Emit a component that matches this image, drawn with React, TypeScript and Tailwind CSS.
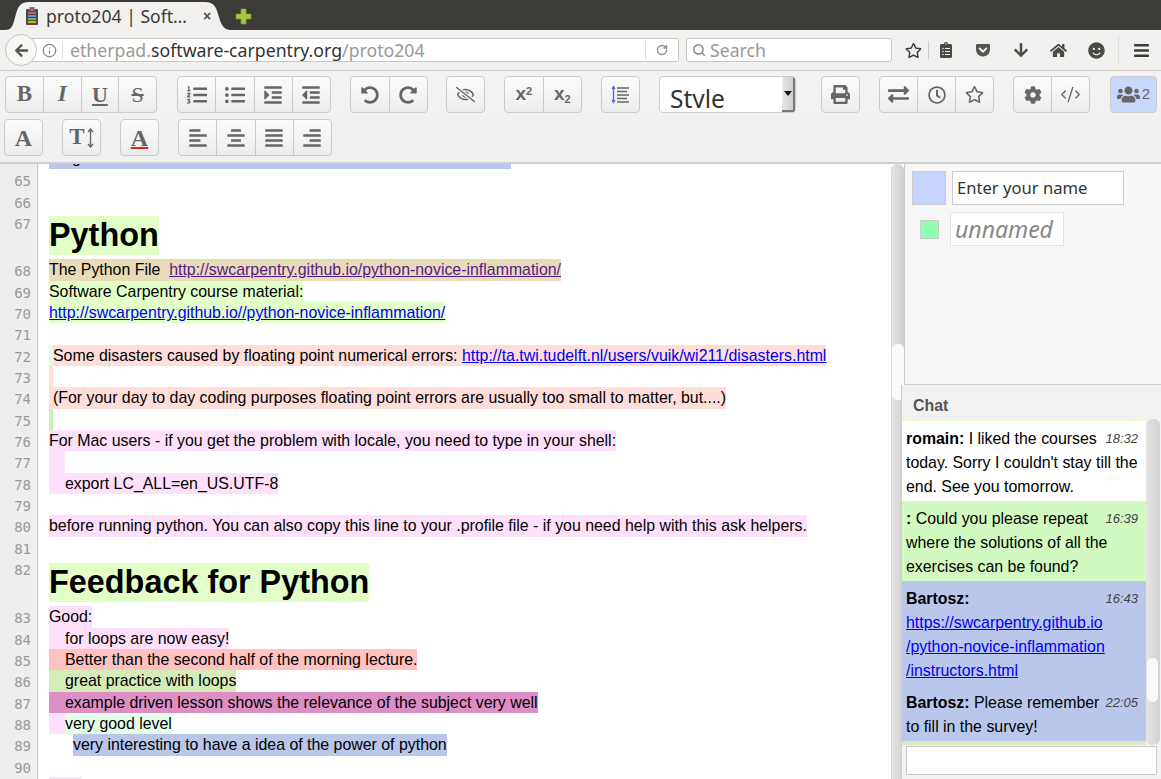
import React from 'react';
import {
  FaAlignCenter,
  FaAlignJustify,
  FaAlignLeft,
  FaAlignRight,
  FaArrowDown,
  FaArrowLeft,
  FaBars,
  FaClipboardList,
  FaCog,
  FaExchangeAlt,
  FaGetPocket,
  FaHome,
  FaIndent,
  FaListOl,
  FaListUl,
  FaOutdent,
  FaPrint,
  FaRedoAlt,
  FaRegClock,
  FaRegEyeSlash,
  FaRegStar,
  FaSmile,
  FaUndoAlt,
  FaUsers,
} from 'react-icons/fa';
import { CodeXml, Info, RotateCw, Search } from 'lucide-react';

const Btn: React.FC<{ children: React.ReactNode }> = ({ children }) => (
  <div className="flex-1 h-full flex items-center justify-center text-[#666] border-l border-[#ccc] first:border-l-0">
    {children}
  </div>
);

const Group: React.FC<{ className: string; children: React.ReactNode }> = ({ className, children }) => (
  <div
    className={`flex h-[37px] shrink-0 rounded-[4px] border border-[#ccc] bg-linear-to-b from-[#fbfbfb] to-[#ededed] ${className}`}
  >
    {children}
  </div>
);

const Serif: React.FC<{ className?: string; children: React.ReactNode }> = ({ className = '', children }) => (
  <span className={`font-['Liberation_Serif',serif] font-bold text-[#666] ${className}`}>{children}</span>
);

const TabBar = () => (
  <div className="h-[30px] bg-[#3c3b37] flex items-end pl-[5px] shrink-0">
    <div className="relative w-[228px] h-[28px] flex items-center pl-[20px] text-[#3c3b37]">
      <svg className="absolute inset-0" width="232" height="28" viewBox="0 0 232 28">
        <path
          d="M0 28 C8 28 8 22 11 12 C13 4 16 0 24 0 L200 0 C208 0 211 4 213 12 C216 22 218 28 226 28 Z"
          fill="#f2f1f0"
        />
      </svg>
      <svg className="relative shrink-0" width="14" height="18" viewBox="0 0 14 18">
        <rect x="1" y="2" width="12" height="16" rx="1" fill="#4a4a46" />
        <rect x="4.5" y="0" width="5" height="4" fill="#77766f" />
        <rect x="3" y="5" width="8" height="2" fill="#d64a9a" />
        <rect x="3" y="8" width="8" height="2" fill="#5b8fd9" />
        <rect x="3" y="11" width="8" height="2" fill="#6cbf3c" />
        <rect x="3" y="14" width="8" height="2" fill="#e8a11c" />
      </svg>
      <span className="relative ml-[7px] font-['Noto_Sans',sans-serif] text-[17.6px] whitespace-pre w-[150px]">proto204 | Soft…</span>
      <span className="relative ml-[7px] text-[14px] font-bold text-[#55544f] font-['Liberation_Sans',sans-serif]">×</span>
    </div>
    <svg className="mb-[5px] ml-[2px]" width="17" height="17" viewBox="0 0 17 17">
      <path d="M6 1h5v5h5v5h-5v5H6v-5H1V6h5z" fill="#a5c93d" stroke="#7f9c2c" strokeWidth="0.7" />
    </svg>
  </div>
);

const NavBar = () => (
  <div className="h-[41px] bg-[#f2f1f0] border-b border-[#cfcac5] flex items-center pl-[5px] shrink-0 font-['Noto_Sans',sans-serif] text-[#4a4a46]">
    <div className="relative z-10 w-[32px] h-[32px] rounded-full border border-[#c9c5c0] bg-[#f7f7f6] flex items-center justify-center shrink-0">
      <FaArrowLeft size={15} className="text-[#55544f]" />
    </div>
    <div className="-ml-[17px] w-[659px] h-[24px] bg-white border border-[#cbc7c2] rounded-[3px] flex items-center shrink-0">
      <Info size={15} className="ml-[21px] text-[#8a8a86] shrink-0" />
      <div className="ml-[5px] w-px h-[18px] bg-[#ddd]" />
      <span className="ml-[7px] text-[17.7px] whitespace-pre text-[#999] w-[575px]">
        etherpad.<span className="text-[#333]">software-carpentry.org</span>/proto204
      </span>
      <div className="w-px h-[18px] bg-[#ddd]" />
      <RotateCw size={12} className="ml-[10px] text-[#8a9499]" strokeWidth={3} />
    </div>
    <div className="ml-[7px] w-[206px] h-[24px] bg-white border border-[#cbc7c2] rounded-[3px] flex items-center pl-[5px] shrink-0">
      <Search size={14} className="text-[#888]" strokeWidth={2.5} />
      <span className="ml-[4px] text-[17.7px] text-[#999]">Search</span>
    </div>
    <FaRegStar size={17} className="ml-[13px] text-[#3c3b37] shrink-0" />
    <div className="ml-[6px] w-px h-[18px] bg-[#ccc]" />
    <FaClipboardList size={16} className="ml-[9px] shrink-0" />
    <FaGetPocket size={16} className="ml-[21px] text-[#55544f] shrink-0" />
    <FaArrowDown size={16} className="ml-[22px] shrink-0" />
    <FaHome size={17} className="ml-[21px] shrink-0" />
    <FaSmile size={17} className="ml-[21px] shrink-0" />
    <div className="ml-[13px] w-px h-[30px] bg-[#e0dedb]" />
    <FaBars size={17} className="ml-[14px] text-[#3c3b37] shrink-0" />
  </div>
);

const Toolbar = () => (
  <div className="h-[93px] bg-linear-to-b from-[#f4f3f3] to-[#f0f0f0] border-b-[2px] border-[#d0d0d0] pt-[5px] pl-[5px] shrink-0">
    <div className="flex gap-[19px]">
      <Group className="w-[152px]">
        <Btn><Serif className="text-[23px]">B</Serif></Btn>
        <Btn><Serif className="text-[23px] italic">I</Serif></Btn>
        <Btn><Serif className="text-[22px] underline underline-offset-2">U</Serif></Btn>
        <Btn><Serif className="text-[22px] line-through font-normal">S</Serif></Btn>
      </Group>
      <Group className="w-[154px] ml-px">
        <Btn><FaListOl size={20} /></Btn>
        <Btn><FaListUl size={20} /></Btn>
        <Btn><FaIndent size={20} /></Btn>
        <Btn><FaOutdent size={20} /></Btn>
      </Group>
      <Group className="w-[78px]">
        <Btn><FaUndoAlt size={18} /></Btn>
        <Btn><FaRedoAlt size={18} /></Btn>
      </Group>
      <Group className="w-[39px] -ml-px">
        <Btn><FaRegEyeSlash size={19} /></Btn>
      </Group>
      <Group className="w-[78px]">
        <Btn>
          <span className="font-['Liberation_Sans',sans-serif] font-bold text-[19px] text-[#666]">
            x<sup className="text-[11px]">2</sup>
          </span>
        </Btn>
        <Btn>
          <span className="font-['Liberation_Sans',sans-serif] font-bold text-[19px] text-[#666]">
            x<sub className="text-[11px]">2</sub>
          </span>
        </Btn>
      </Group>
      <Group className="w-[39px]">
        <Btn>
          <svg width="19" height="19" viewBox="0 0 19 19">
            <path d="M2.5 2v15M1 4l1.5-2.5L4 4M1 15l1.5 2.5L4 15" stroke="#4a6fd8" strokeWidth="1.3" fill="none" />
            <path d="M6 3h12M6 6.5h10M6 10h12M6 13.5h10M6 17h12" stroke="#666" strokeWidth="1.4" />
          </svg>
        </Btn>
      </Group>
      <div className="relative w-[137px] h-[37px] shrink-0 rounded-[4px] border border-[#ccc] bg-white overflow-hidden flex">
        <div className="flex-1 h-[31px] overflow-hidden pl-[10px] font-['Noto_Sans',sans-serif] text-[24.5px] leading-[43px] text-[#333]">
          Style
        </div>
        <div className="w-[13px] h-full bg-linear-to-r from-[#e6e6e6] to-[#cfcfcf] border-r-[2px] border-b-[2px] border-[#777] flex justify-center pt-[14px]">
          <div className="w-0 h-0 border-x-[4px] border-x-transparent border-t-[5px] border-t-[#111]" />
        </div>
      </div>
      <Group className="w-[39px] ml-[6px]">
        <Btn><FaPrint size={19} /></Btn>
      </Group>
      <Group className="w-[115px]">
        <Btn><FaExchangeAlt size={21} /></Btn>
        <Btn><FaRegClock size={18} /></Btn>
        <Btn><FaRegStar size={19} /></Btn>
      </Group>
      <Group className="w-[77px]">
        <Btn><FaCog size={18} /></Btn>
        <Btn><CodeXml size={21} strokeWidth={1.5} /></Btn>
      </Group>
      <div className="ml-px w-[47px] h-[37px] shrink-0 rounded-[4px] border border-[#ccc] bg-[#c9d7fa] flex items-center justify-center gap-[2px] text-[#666]">
        <FaUsers size={23} />
        <span className="font-['Liberation_Sans',sans-serif] text-[15px]">2</span>
      </div>
    </div>
    <div className="flex mt-[6px] -ml-px">
      <Group className="w-[39px]">
        <Btn><Serif className="text-[24px]">A</Serif></Btn>
      </Group>
      <Group className="w-[39px] ml-[19px]">
        <Btn>
          <Serif className="text-[23px] flex items-center">
            T
            <svg className="ml-[2px]" width="7" height="20" viewBox="0 0 7 20">
              <path d="M3.5 1v18M1 4l2.5-3L6 4M1 16l2.5 3L6 16" stroke="#666" strokeWidth="1.4" fill="none" />
            </svg>
          </Serif>
        </Btn>
      </Group>
      <Group className="w-[39px] ml-[19px]">
        <Btn><Serif className="text-[24px] underline decoration-[#e02020] decoration-[1.5px] underline-offset-1">A</Serif></Btn>
      </Group>
      <Group className="w-[154px] ml-[19px]">
        <Btn><FaAlignLeft size={20} /></Btn>
        <Btn><FaAlignCenter size={20} /></Btn>
        <Btn><FaAlignJustify size={20} /></Btn>
        <Btn><FaAlignRight size={20} /></Btn>
      </Group>
    </div>
  </div>
);

const Row: React.FC<{ n?: number; h?: string; children?: React.ReactNode }> = ({ n, h = 'h-[21.33px]', children }) => (
  <div className={`flex shrink-0 ${h}`}>
    <div className="w-[38px] shrink-0 bg-[#eeeeee] border-r border-[#c8c8c8] text-right pr-[6px] pt-[2px] font-['DejaVu_Sans_Mono',monospace] text-[14px] leading-[21.33px] text-[#999]">
      {n}
    </div>
    <div className="flex-1 flex pl-[11px] min-w-0">{children}</div>
  </div>
);

const Seg: React.FC<{ className: string; children?: React.ReactNode }> = ({ className, children }) => (
  <span className={`inline-block h-full whitespace-pre leading-[21.33px] ${className}`}>{children}</span>
);

const Link: React.FC<{ className?: string; children: React.ReactNode }> = ({ className = 'text-[#0000ee]', children }) => (
  <span className={`underline ${className}`}>{children}</span>
);

const Heading: React.FC<{ className: string; children: React.ReactNode }> = ({ className, children }) => (
  <span className={`inline-block h-[39px] leading-[39px] bg-[#e2ffc8] text-[32.4px] font-bold ${className}`}>{children}</span>
);

const Editor = () => (
  <div className="flex-1 min-w-0 bg-white flex flex-col overflow-hidden font-['Liberation_Sans',sans-serif] text-[15.9px] text-black">
    <Row h="h-[5.4px]">
      <div className="w-[462px] h-[5px] bg-[#bac7ea] overflow-hidden pl-[23px]">
        <div className="-mt-[17px] leading-[21px]">g</div>
      </div>
    </Row>
    <Row n={65} />
    <Row n={66} />
    <Row n={67} h="h-[47.4px]"><Heading className="mt-[4px]">Python</Heading></Row>
    <Row n={68}>
      <Seg className="bg-[#e8dcb8]">The Python File  <Link className="text-[#551a8b]">http://swcarpentry.github.io/python-novice-inflammation/</Link></Seg>
    </Row>
    <Row n={69}><Seg className="bg-[#e2ffc8]">Software Carpentry course material:</Seg></Row>
    <Row n={70}><Seg className="bg-[#e2ffc8]"><Link>http://swcarpentry.github.io//python-novice-inflammation/</Link></Seg></Row>
    <Row n={71} />
    <Row n={72}>
      <Seg className="w-[4px] bg-[#e4fbe8]" />
      <Seg className="bg-[#ffdeda]">Some disasters caused by floating point numerical errors: <Link>http://ta.twi.tudelft.nl/users/vuik/wi211/disasters.html</Link></Seg>
    </Row>
    <Row n={73}><Seg className="w-[4px] bg-[#ffdeda]" /></Row>
    <Row n={74}>
      <Seg className="w-[4px] bg-[#ffdeda]" />
      <Seg className="bg-[#ffdeda]">(For your day to day coding purposes floating point errors are usually too small to matter, but....)</Seg>
    </Row>
    <Row n={75}><Seg className="w-[4px] bg-[#c5f5b0]" /></Row>
    <Row n={76}><Seg className="bg-[#fee0fa]">For Mac users - if you get the problem with locale, you need to type in your shell:</Seg></Row>
    <Row n={77}><Seg className="w-[16px] bg-[#fee0fa]" /></Row>
    <Row n={78}><Seg className="bg-[#fee0fa] pl-[16px]">export LC_ALL=en_US.UTF-8</Seg></Row>
    <Row n={79} />
    <Row n={80}><Seg className="bg-[#fee0fa]">before running python. You can also copy this line to your .profile file - if you need help with this ask helpers.</Seg></Row>
    <Row n={81} />
    <Row n={82} h="h-[48.4px]"><Heading className="mt-[5px]">Feedback for Python</Heading></Row>
    <Row n={83}><Seg className="bg-[#fee0fa]">Good:</Seg></Row>
    <Row n={84}><Seg className="bg-[#fee0fa] pl-[16px]">for loops are now easy!</Seg></Row>
    <Row n={85}><Seg className="bg-[#ffc2c0] pl-[16px]">Better than the second half of the morning lecture.</Seg></Row>
    <Row n={86}><Seg className="bg-[#d5ebb8] pl-[16px]">great practice with loops</Seg></Row>
    <Row n={87}><Seg className="bg-[#dc8fc5] pl-[16px]">example driven lesson shows the relevance of the subject very well</Seg></Row>
    <Row n={88}>
      <Seg className="w-[16px] bg-[#fee0fa]" />
      <Seg className="bg-[#e3ffe9]">very good level</Seg>
    </Row>
    <Row n={89}><Seg className="ml-[24px] bg-[#b9c6ea]">very interesting to have a idea of the power of python</Seg></Row>
    <Row n={90} />
    <Row n={91}><Seg className="w-[33px] bg-[#fee0fa]" /></Row>
  </div>
);

const Scrollbar = () => (
  <div className="w-[13px] shrink-0 rounded-t-[6px] bg-linear-to-r from-[#e4e4e4] to-[#cfcfcf] border-l border-[#d8d8d8] pt-[180px]">
    <div className="w-[12px] h-[56px] rounded-[5px] bg-[#fafafa]" />
  </div>
);

const Time: React.FC<{ children: React.ReactNode }> = ({ children }) => (
  <span className="float-right italic text-[13px] text-[#444] leading-[20px] mt-[2px] ml-[4px] mr-[4px]">{children}</span>
);

const Chat = () => (
  <div className="relative -ml-[3px] flex-1 min-h-0 bg-[#f2f2f2] border-l border-[#ccc] font-['Liberation_Sans',sans-serif] text-[15.9px] leading-[24px] text-black">
    <div className="h-[34px] pl-[11px] pt-[9px] font-bold text-[#555]">Chat</div>
    <div className="flex h-[326px]">
      <div className="w-[244px] shrink-0 overflow-hidden bg-white">
        <div className="h-[2px] bg-[#e2ffc8]" />
        <div className="pt-[6px] pb-[2px] pl-[4px] pr-[4px]">
          <Time>18:32</Time>
          <b>romain:</b> I liked the courses today. Sorry I couldn't stay till the end. See you tomorrow.
        </div>
        <div className="pt-[6px] pb-[2px] pl-[4px] pr-[4px] bg-[#d2fac0]">
          <Time>16:39</Time>
          <b>:</b> Could you please repeat where the solutions of all the exercises can be found?
        </div>
        <div className="pt-[6px] pb-[2px] pl-[4px] pr-[4px] bg-[#bbc7ea]">
          <Time>16:43</Time>
          <b>Bartosz:</b>
          <br />
          <Link>
            https://swcarpentry.github.io
            <br />
            /python-novice-inflammation
            <br />
            /instructors.html
          </Link>
        </div>
        <div className="pt-[6px] pb-[2px] pl-[4px] pr-[4px] bg-[#bbc7ea]">
          <Time>22:05</Time>
          <b>Bartosz:</b> Please remember to fill in the survey!
        </div>
        <div className="h-[4px] bg-[#d5ebc0]" />
      </div>
      <div className="w-[14px] shrink-0 rounded-[6px] bg-linear-to-r from-[#e4e4e4] to-[#d2d2d2] pt-[239px]">
        <div className="w-[11px] ml-px h-[44px] rounded-[5px] bg-[#fafafa]" />
      </div>
    </div>
    <div className="ml-[4px] mt-px w-[251px] h-[29px] bg-white border border-[#c8c8c8]" />
  </div>
);

const Users = () => (
  <div className="h-[221px] shrink-0 bg-[#f7f7f7] border-l border-b border-[#ccc] font-['Noto_Sans',sans-serif]">
    <div className="flex pt-[7px] pl-[7px] gap-[6px]">
      <div className="w-[34px] h-[34px] bg-[#c6d4ff] border border-[#ccc]" />
      <div className="w-[172px] h-[34px] bg-white border border-[#ccc] pl-[4px] text-[16.6px] leading-[32px] text-[#333]">
        Enter your name
      </div>
    </div>
    <div className="flex items-center pt-[7px] pl-[15px]">
      <div className="w-[19px] h-[19px] bg-[#8fffb0] border border-[#ccc]" />
      <div className="ml-[11px] w-[114px] h-[34px] bg-white border border-[#e4e4e4] pl-[4px] italic text-[23px] leading-[32px] text-[#888]">
        unnamed
      </div>
    </div>
  </div>
);

export default function App() {
  return (
    <div className="h-[779px] w-[1161px] overflow-hidden flex flex-col">
      <TabBar />
      <NavBar />
      <Toolbar />
      <div className="flex-1 min-h-0 flex">
        <Editor />
        <div className="w-[270px] shrink-0 flex">
          <Scrollbar />
          <div className="flex-1 min-w-0 flex flex-col">
            <Users />
            <Chat />
          </div>
        </div>
      </div>
    </div>
  );
}
